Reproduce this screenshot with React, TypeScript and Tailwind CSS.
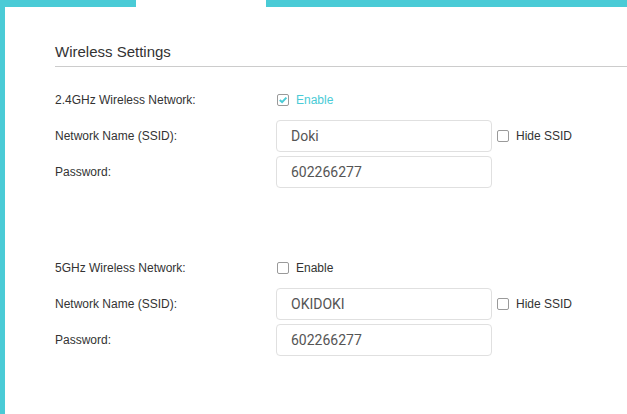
import React from "react";

function Box({ checked }: { checked?: boolean }) {
  return (
    <span className="relative inline-block w-[12px] h-[12px] border border-[#9a9a9a] rounded-[2px] bg-white shrink-0">
      {checked && (
        <svg viewBox="0 0 10 10" className="absolute left-0 top-0 w-[10px] h-[10px]">
          <path d="M1.8 5 L4.1 7.2 L8.4 2.6" fill="none" stroke="#4acbd6" strokeWidth="2" />
        </svg>
      )}
    </span>
  );
}

function Field({ value, hide }: { value: string; hide?: boolean }) {
  return (
    <div className="flex items-center">
      <div className="w-[216px] h-[32px] border border-[#e0e0e0] rounded-[4px] flex items-center pl-[14px] text-[14px] text-[#555] font-['Roboto',sans-serif]">
        {value}
      </div>
      {hide && (
        <div className="flex items-center ml-[5px] gap-[7px]">
          <Box />
          <span className="text-[12px] text-[#333]">Hide SSID</span>
        </div>
      )}
    </div>
  );
}

function Row({ label, children, h = 32 }: { label: string; children: React.ReactNode; h?: number }) {
  return (
    <div className={`flex items-center ${h === 24 ? "h-[24px]" : "h-[32px]"}`}>
      <div className="w-[221px] text-[12px] text-[#333]">{label}</div>
      {children}
    </div>
  );
}

function Section({ title, checked, ssid }: { title: string; checked: boolean; ssid: string }) {
  return (
    <div className="flex flex-col">
      <Row label={title} h={24}>
        <div className="flex items-center gap-[7px] pl-[1px]">
          <Box checked={checked} />
          <span className={`text-[12px] ${checked ? "text-[#4acbd6]" : "text-[#333]"}`}>Enable</span>
        </div>
      </Row>
      <div className="mt-[8px]">
        <Row label="Network Name (SSID):">
          <Field value={ssid} hide />
        </Row>
      </div>
      <div className="mt-[4px]">
        <Row label="Password:">
          <Field value="602266277" />
        </Row>
      </div>
    </div>
  );
}

export default function App() {
  return (
    <div className="flex w-[627px] h-[414px] overflow-hidden bg-white font-['Liberation_Sans',Arial,sans-serif]">
      <div className="w-[5px] bg-[#4acbd6] shrink-0" />
      <div className="flex-1 flex flex-col">
        <div className="flex h-[7px] shrink-0">
          <div className="w-[131px] bg-[#4acbd6]" />
          <div className="w-[130px] bg-white" />
          <div className="flex-1 bg-[#4acbd6]" />
        </div>
        <div className="pl-[50px]">
          <div className="mt-[35px] text-[15px] leading-[20px] text-[#333] pb-[4px] border-b border-[#cccccc]">
            Wireless Settings
          </div>
          <div className="mt-[21px]">
            <Section title="2.4GHz Wireless Network:" checked ssid="Doki" />
          </div>
          <div className="mt-[68px]">
            <Section title="5GHz Wireless Network:" checked={false} ssid="OKIDOKI" />
          </div>
        </div>
      </div>
    </div>
  );
}
